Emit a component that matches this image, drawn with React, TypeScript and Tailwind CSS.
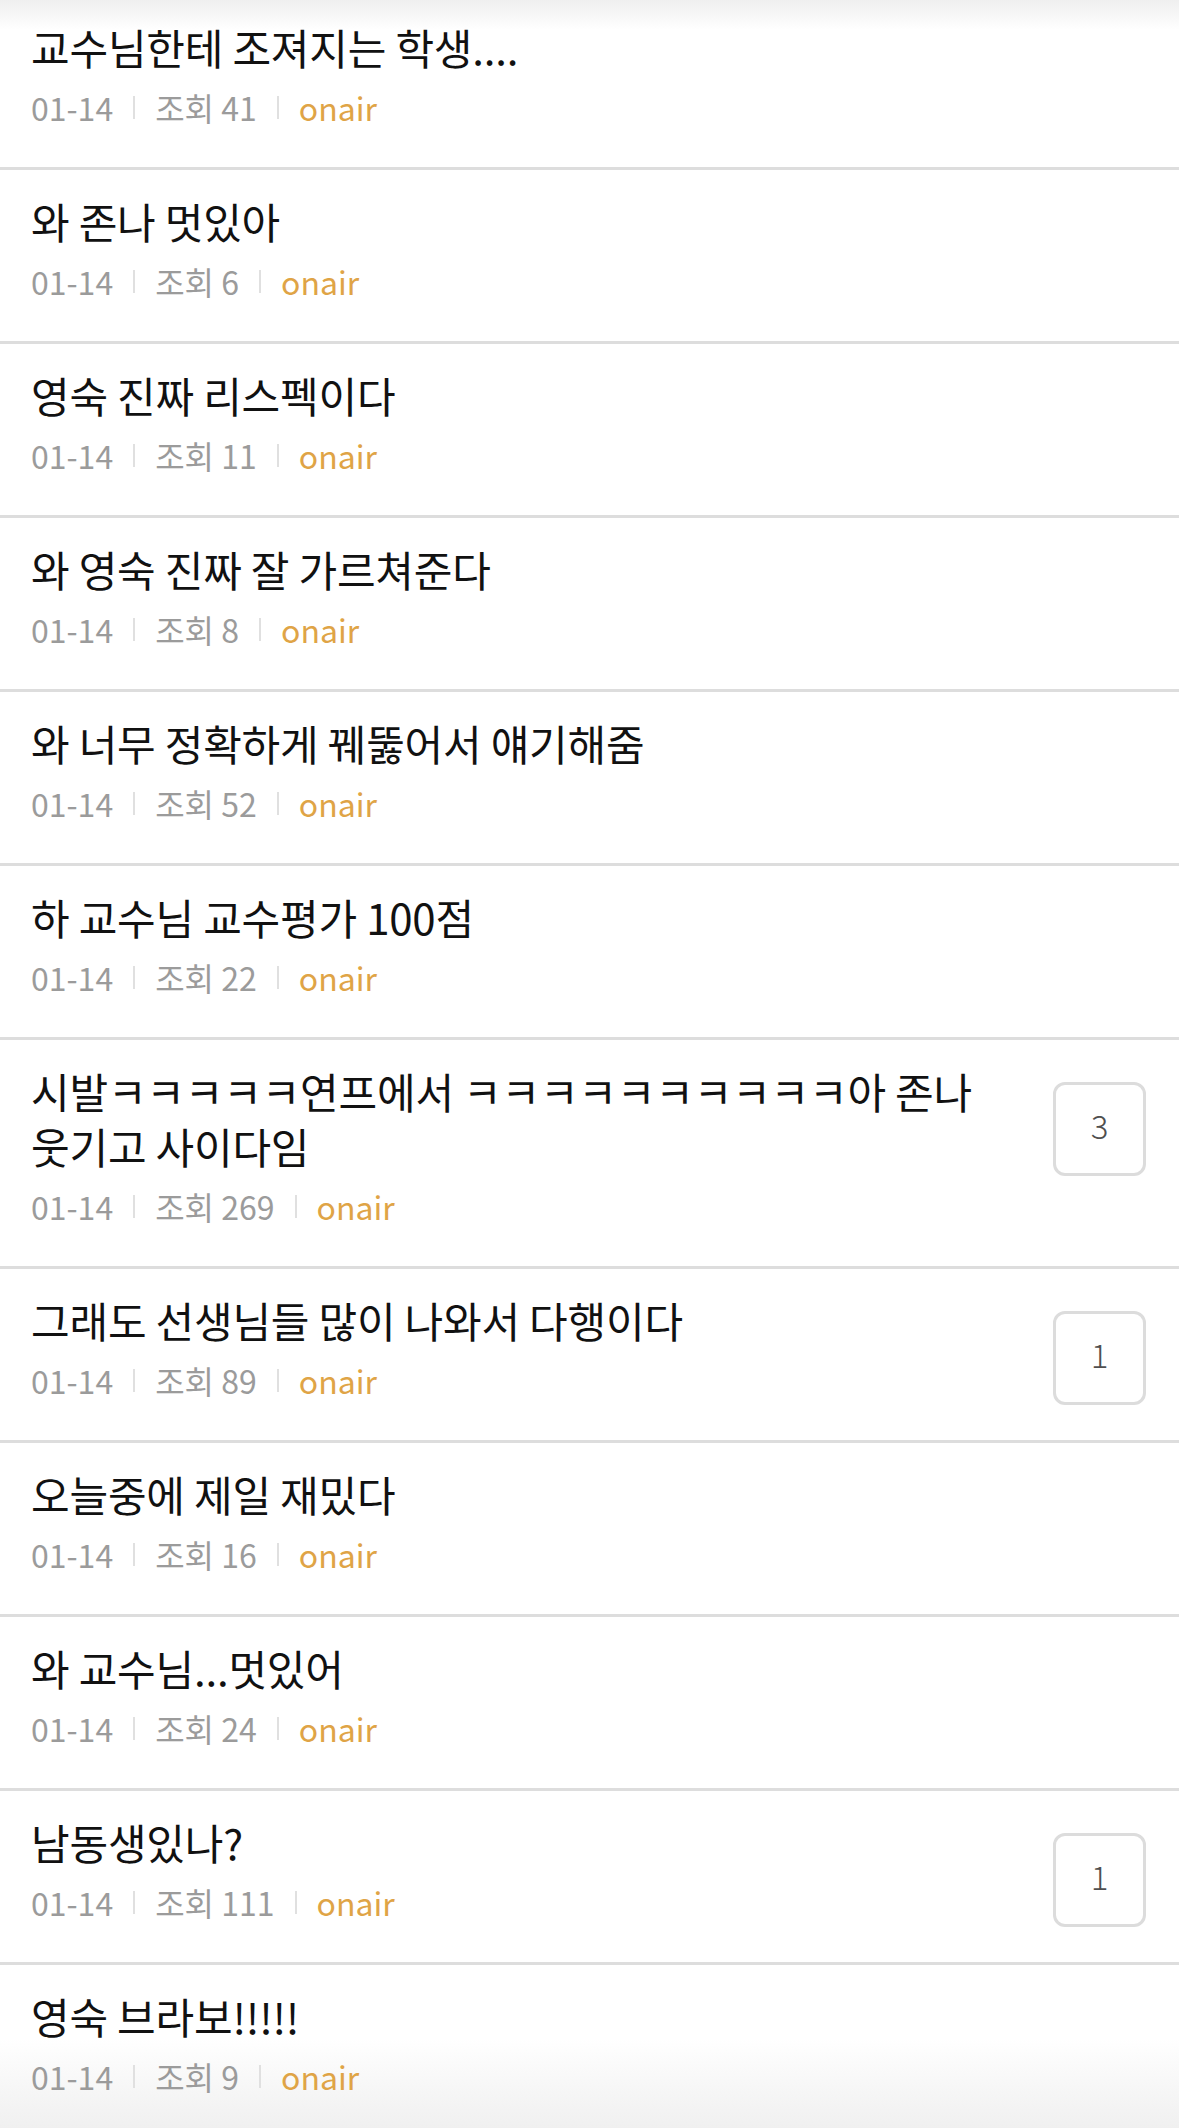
import React from 'react';

type Post = {
  title: string;
  views: number;
  comments?: number;
};

const posts: Post[] = [
  { title: '교수님한테 조져지는 학생....', views: 41 },
  { title: '와 존나 멋있아', views: 6 },
  { title: '영숙 진짜 리스펙이다', views: 11 },
  { title: '와 영숙 진짜 잘 가르쳐준다', views: 8 },
  { title: '와 너무 정확하게 꿰뚫어서 얘기해줌', views: 52 },
  { title: '하 교수님 교수평가 100점', views: 22 },
  { title: '시발ㅋㅋㅋㅋㅋ연프에서 ㅋㅋㅋㅋㅋㅋㅋㅋㅋㅋ아 존나 웃기고 사이다임', views: 269, comments: 3 },
  { title: '그래도 선생님들 많이 나와서 다행이다', views: 89, comments: 1 },
  { title: '오늘중에 제일 재밌다', views: 16 },
  { title: '와 교수님...멋있어', views: 24 },
  { title: '남동생있나?', views: 111, comments: 1 },
  { title: '영숙 브라보!!!!!', views: 9 },
];

const font = { fontFamily: '"Noto Sans CJK KR", "Noto Sans", sans-serif' };

const Divider: React.FC = () => <span className="w-[2px] h-[23px] bg-[#e0e0e0]" />;

const PostRow: React.FC<{ post: Post }> = ({ post }) => (
  <li className="flex items-start border-b-[3px] border-[#dddddd] pl-[31px] pr-[33px] pt-[23px] pb-[38px]">
    <div className="flex-1 min-w-0 pr-[30px]">
      <p className="break-keep text-[42px] leading-[55px] tracking-[-0.2px] text-[#111111]">{post.title}</p>
      {/* meta line */}
      <div className="mt-[11px] flex items-center gap-[20px] text-[32px] leading-[44px] text-[#9b9b9b]">
        <span>01-14</span>
        <Divider />
        <span>조회 {post.views}</span>
        <Divider />
        <span className="text-[#dfa446]">onair</span>
      </div>
    </div>
    {post.comments !== undefined && (
      <div className="mt-[19px] -mb-[20px] flex h-[94px] w-[93px] shrink-0 items-center justify-center rounded-[12px] border-[3px] border-[#dcdcdc] pb-[6px] text-[33px] font-light text-[#4f4f4f]">
        {post.comments}
      </div>
    )}
  </li>
);

export default function App() {
  return (
    <div className="relative h-screen overflow-hidden bg-white" style={font}>
      {/* scroll fade edges, behind the list */}
      <div className="pointer-events-none absolute inset-x-0 top-0 h-[30px] bg-gradient-to-b from-[#efefef] to-white" />
      <div className="pointer-events-none absolute inset-x-0 bottom-0 h-[90px] bg-gradient-to-t from-[#f0f0f0] to-white" />
      <ul className="relative z-10 -mt-[4px]">
        {posts.map((p, i) => (
          <PostRow key={i} post={p} />
        ))}
      </ul>
    </div>
  );
}
